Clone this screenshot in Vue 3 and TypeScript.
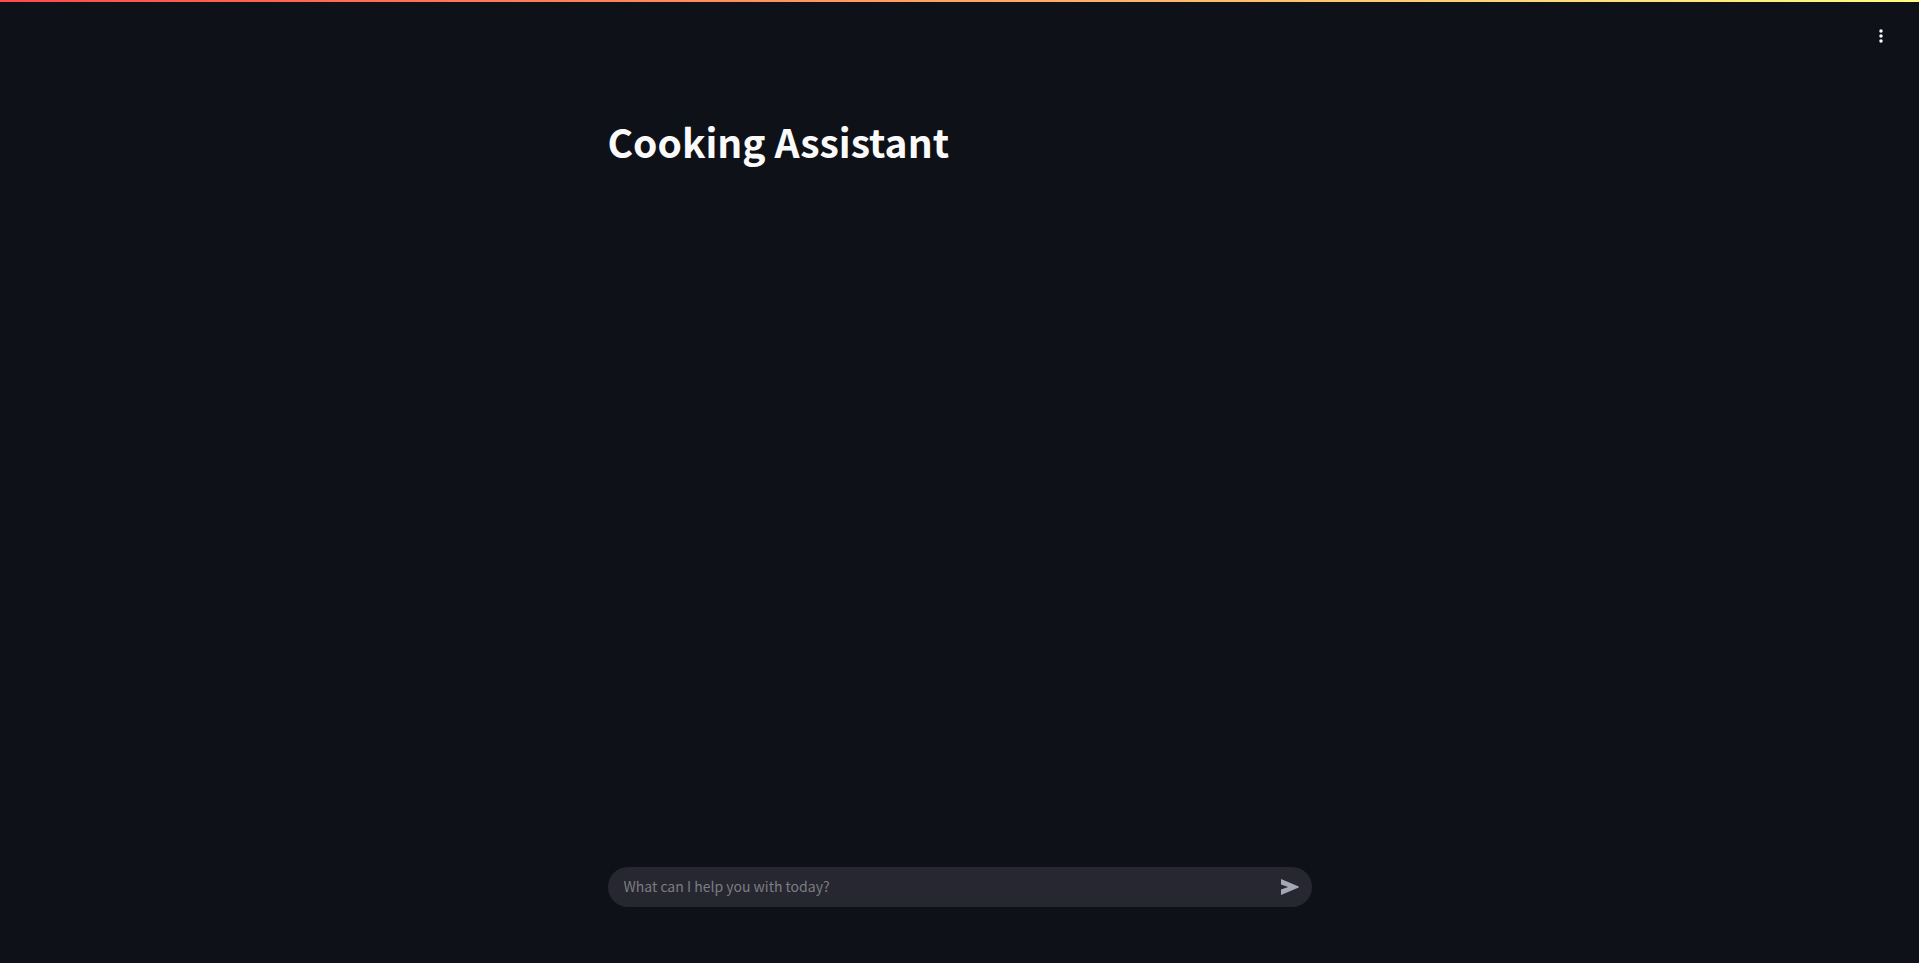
<script setup lang="ts">
import { ref } from 'vue'

const message = ref('')

function send(): void {
  message.value = ''
}
</script>

<template>
  <div class="app">
    <div class="decoration"></div>
    <header class="toolbar">
      <button class="menu" type="button" aria-label="Main menu">
        <svg viewBox="0 0 16 16" width="16" height="16" fill="currentColor">
          <circle cx="8" cy="2.9" r="1.75" /><circle cx="8" cy="8" r="1.75" /><circle cx="8" cy="13.1" r="1.75" />
        </svg>
      </button>
    </header>
    <main class="content">
      <h1>Cooking Assistant</h1>
    </main>
    <footer class="bottom">
      <form class="chat" @submit.prevent="send">
        <input v-model="message" type="text" aria-label="Message" placeholder="What can I help you with today?" />
        <button class="send" type="submit" aria-label="Send">
          <svg viewBox="0 0 20 20" width="20" height="20" fill="currentColor">
            <path d="M1 2v5.6L8.2 10 1 12.4V18L18.7 10.6V9.4z" />
          </svg>
        </button>
      </form>
    </footer>
  </div>
</template>

<style scoped>
.app {
  min-height: 100vh;
  display: flex;
  flex-direction: column;
  background: #0e1117;
  color: #fafafa;
  font-family: "Source Sans Pro", "Noto Sans CJK SC", sans-serif;
}
.decoration {
  height: 2px;
  background: linear-gradient(90deg, #ff4b4b, #fffd80);
}
.toolbar {
  display: flex;
  justify-content: flex-end;
  padding: 22px 26px 0;
}
.menu {
  display: flex;
  padding: 4px;
  border: 0;
  background: transparent;
  color: inherit;
}
.content,
.bottom {
  width: 100%;
  max-width: 704px;
  margin: 0 auto;
}
.content {
  flex: 1;
  padding-top: 67px;
}
h1 {
  margin: 0;
  font-size: 39px;
  font-weight: 700;
  line-height: 52px;
}
.bottom {
  padding-bottom: 56px;
}
.chat {
  display: flex;
  align-items: center;
  height: 40px;
  border-radius: 20px;
  background: #262730;
}
.chat input {
  flex: 1;
  min-width: 0;
  padding: 0 16px 2px;
  border: 0;
  outline: 0;
  background: transparent;
  color: #fafafa;
  font-family: inherit;
  font-size: 14px;
  line-height: 22px;
}
.chat input::placeholder {
  color: #7c7d83;
  opacity: 1;
}
.send {
  display: flex;
  padding: 10px 12px;
  border: 0;
  background: transparent;
  color: #a3a8b4;
}
</style>

<style>
body {
  margin: 0;
  background: #0e1117;
}
</style>
